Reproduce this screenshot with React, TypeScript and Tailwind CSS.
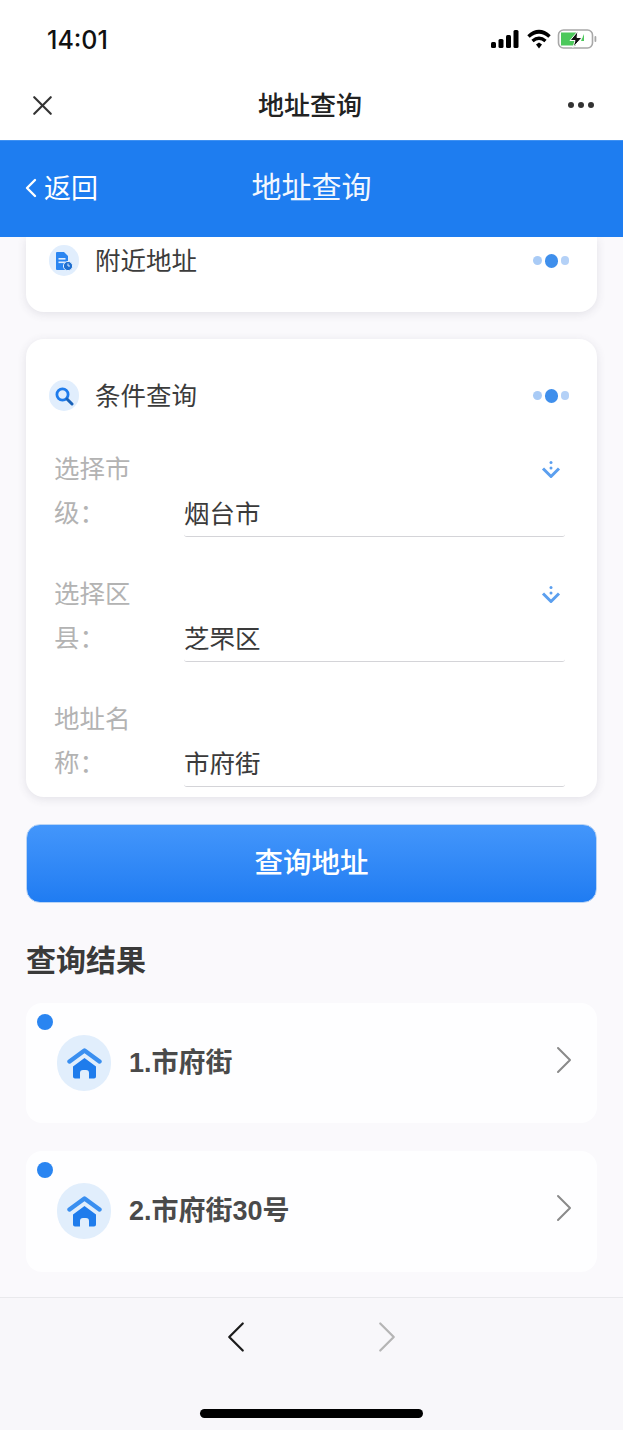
import { ChevronLeft, ChevronRight, X } from 'lucide-react'

const cjk = { fontFamily: '"Noto Sans CJK SC", sans-serif' }

function Dots() {
  return (
    <div className="flex items-center gap-[3px]">
      <span className="w-[9px] h-[9px] rounded-full bg-[#a9cbf6]" />
      <span className="w-[13px] h-[14px] rounded-full bg-[#3f8fec]" />
      <span className="w-[8px] h-[9px] rounded-full bg-[#b4d1f7]" />
    </div>
  )
}

function SectionTitle({ title, icon }: { title: string; icon: React.ReactNode }) {
  return (
    <div className="flex items-center pl-[23px] pr-[28px]">
      <div className="w-[30px] h-[31px] rounded-full bg-[#e1eefd] flex items-center justify-center shrink-0">
        {icon}
      </div>
      <span className="ml-[16px] mb-[4px] text-[25.5px] leading-[26px] text-[#3c3c3c] flex-1">{title}</span>
      <Dots />
    </div>
  )
}

function Field({ label, tail, value, arrow }: { label: string; tail: string; value: string; arrow?: boolean }) {
  return (
    <div className="relative flex pl-[28px] pr-[32px] h-[125px]">
      <div className="w-[131px] shrink-0 text-[25.5px] leading-[44px] text-[#b3b3b3]">
        <div>{label}</div>
        <div>{tail}</div>
      </div>
      <div className="flex-1 h-[92px] border-b border-[#d4d4d8] flex items-end pb-[5px] rounded-b-[3px] -ml-[1px]">
        <span className="text-[25.5px] leading-[38px] text-[#3a3a3a]">{value}</span>
      </div>
      {arrow && (
        <svg className="absolute right-[36px] top-[15px]" width="20" height="20" viewBox="0 0 20 20" fill="none">
          <circle cx="10" cy="2.5" r="1.5" fill="#5b9fef" />
          <circle cx="10" cy="8" r="1.5" fill="#5b9fef" />
          <path d="M2 8.5 L10 16.5 L18 8.5" stroke="#5b9fef" strokeWidth="3" strokeLinejoin="round" />
        </svg>
      )}
    </div>
  )
}

function HouseIcon() {
  return (
    <svg width="35" height="31" viewBox="0 0 35 31" fill="none">
      <path d="M2.5 13.5 L17.5 2.5 L32.5 13.5" stroke="#3a8ff0" strokeWidth="4.4" strokeLinecap="round" strokeLinejoin="round" />
      <path d="M17.5 10 L29 18.5 V28.5 a2 2 0 0 1 -2 2 H22 V25 a3 3 0 0 0 -3 -3 H16 a3 3 0 0 0 -3 3 V30.5 H8 a2 2 0 0 1 -2 -2 V18.5 Z" fill="#1f7cec" />
    </svg>
  )
}

function ResultRow({ name, height }: { name: string; height: string }) {
  return (
    <div className={`relative bg-[#fefeff] rounded-[16px] flex items-start pl-[31px] pr-[9px] pt-[32px] ${height}`}>
      <span className="absolute left-[11px] top-[11px] w-[16px] h-[16px] rounded-full bg-[#2a85f1]" />
      <div className="w-[54px] h-[56px] rounded-full bg-[#e1eefc] flex items-center justify-center shrink-0">
        <HouseIcon />
      </div>
      <span
        className="ml-[18px] mt-[8px] text-[27px] leading-[40px] font-bold text-[#4a4a4a] flex-1"
        style={{ fontFamily: '"Liberation Sans", "Noto Sans CJK SC", sans-serif' }}
      >
        {name}
      </span>
      <ChevronRight className="mt-[1px] text-[#8a8a8a]" size={48} strokeWidth={1} />
    </div>
  )
}

export default function App() {
  return (
    <div className="w-[623px] h-[1430px] flex flex-col bg-[#faf9fc] overflow-hidden" style={cjk}>
      {/* status bar */}
      <div className="h-[70px] bg-white flex items-start justify-between pl-[47px] pr-[26px] pt-[24px] shrink-0">
        <span className="text-[25px] leading-[32px] font-medium text-[#111]" style={{ fontFamily: 'Inter, sans-serif' }}>14:01</span>
        <svg className="mt-[5px]" width="106" height="22" viewBox="0 0 106 22" fill="none">
          <rect x="0" y="13" width="5" height="6" rx="1.5" fill="#000" />
          <rect x="7.5" y="10" width="5" height="9" rx="1.5" fill="#000" />
          <rect x="15" y="6" width="5" height="13" rx="1.5" fill="#000" />
          <rect x="22.5" y="1" width="5" height="18" rx="1.5" fill="#000" />
          <path d="M37.5 7.5 Q48 -2 58.5 7.5" stroke="#000" strokeWidth="3.6" fill="none" />
          <path d="M41.5 12 Q48 6.5 54.5 12" stroke="#000" strokeWidth="3.4" fill="none" />
          <path d="M45 15.5 L48 13.5 L51 15.5 L48 19.5 Z" fill="#000" />
          <rect x="67.5" y="1" width="34" height="18" rx="5" stroke="#a8a8a8" strokeWidth="1.6" />
          <path d="M70 3.5 H85 V16.5 H70 Z" fill="#4cc85b" />
          <path d="M93 5 V12 H90 Z" fill="#4cc85b" />
          <path d="M87 2 L79 11.5 H84 L82 18.5 L91 8.5 H86 Z" fill="#111" stroke="#fff" strokeWidth="1" />
          <rect x="103.5" y="7" width="1.8" height="6" rx="0.9" fill="#a8a8a8" />
        </svg>
      </div>

      {/* nav bar */}
      <div className="relative h-[70px] bg-white flex items-center justify-between pl-[26px] pr-[29px] shrink-0">
        <X className="text-[#333]" size={33} strokeWidth={1.6} />
        <span className="absolute left-0 right-[3px] mb-[3px] text-center text-[26px] leading-[36px] font-medium text-[#222]">地址查询</span>
        <div className="flex gap-[4px]">
          <span className="w-[6px] h-[6px] rounded-full bg-[#333]" />
          <span className="w-[6px] h-[6px] rounded-full bg-[#333]" />
          <span className="w-[6px] h-[6px] rounded-full bg-[#333]" />
        </div>
      </div>

      {/* page header */}
      <div className="relative h-[97px] bg-[#1e7df0] flex items-center shrink-0 pl-[15px] pb-[5px] border-t border-[#3f91f2]">
        <ChevronLeft className="text-white mt-[3px]" size={32} strokeWidth={1.8} />
        <span className="-ml-[3px] text-[27px] leading-[36px] text-white">返回</span>
        <span className="absolute left-0 right-0 mb-[3px] text-center text-[30px] leading-[40px] text-[#f2f7fe]">地址查询</span>
      </div>

      {/* content */}
      <div className="flex-1 flex flex-col px-[26px]">
        <div className="h-[75px] bg-white rounded-b-[18px] shadow-[0_2px_10px_rgba(60,60,80,0.12)] pt-[8px]">
          <SectionTitle
            title="附近地址"
            icon={
              <svg width="18" height="20" viewBox="0 0 18 20" fill="none">
                <path d="M1 2 a1 1 0 0 1 1 -1 H9 L13 5 V18 a1 1 0 0 1 -1 1 H2 a1 1 0 0 1 -1 -1 Z" fill="#2a85f1" />
                <rect x="3.5" y="7" width="7" height="1.6" fill="#e1eefd" />
                <rect x="3.5" y="10.5" width="7" height="1.6" fill="#e1eefd" />
                <circle cx="13" cy="15" r="4.6" fill="#1f6fd0" stroke="#e1eefd" />
                <path d="M13 12.5 V15 H15" stroke="#e1eefd" strokeWidth="1" />
              </svg>
            }
          />
        </div>

        <div className="mt-[27px] h-[458px] bg-white rounded-[18px] shadow-[0_2px_10px_rgba(60,60,80,0.12)] overflow-hidden pt-[41px]">
          <SectionTitle
            title="条件查询"
            icon={
              <svg width="20" height="20" viewBox="0 0 20 20" fill="none">
                <circle cx="8.5" cy="8.5" r="5.6" stroke="#1f7cec" strokeWidth="2.8" />
                <path d="M13 13 L18 18" stroke="#1a62b8" strokeWidth="3" strokeLinecap="round" />
              </svg>
            }
          />
          <div className="mt-[34px]">
            <Field label="选择市" tail="级：" value="烟台市" arrow />
            <Field label="选择区" tail="县：" value="芝罘区" arrow />
            <Field label="地址名" tail="称：" value="市府街" />
          </div>
        </div>

        <button className="mt-[27px] h-[79px] rounded-[14px] border border-[#b9d4f5] bg-gradient-to-b from-[#4396fb] to-[#1f7cf2] text-white text-[28.5px] font-medium leading-[40px] pb-[5px]">
          查询地址
        </button>

        <div className="mt-[33px] text-[30px] leading-[44px] font-bold text-[#3a3a3a]">查询结果</div>

        <div className="mt-[23px] flex flex-col gap-[28px]">
          <ResultRow name="1.市府街" height="h-[120px]" />
          <ResultRow name="2.市府街30号" height="h-[121px]" />
        </div>
      </div>

      {/* bottom toolbar */}
      <div className="relative h-[133px] border-t border-[#e9e9ec] bg-[#f8f7fa] shrink-0 flex justify-center gap-[97px] pt-[12px]">
        <ChevronLeft className="text-[#1c1c1c]" size={54} strokeWidth={1} />
        <ChevronRight className="text-[#b5b5b5]" size={54} strokeWidth={1} />
        <span className="absolute left-[200px] bottom-[12px] w-[223px] h-[9px] rounded-full bg-black" />
      </div>
    </div>
  )
}
